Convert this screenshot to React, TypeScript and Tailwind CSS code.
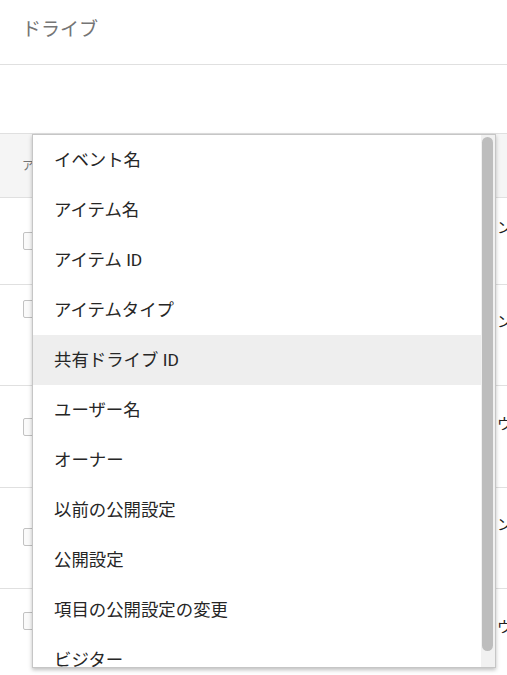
import React from 'react'

const OPTIONS = [
  'イベント名',
  'アイテム名',
  'アイテム ID',
  'アイテムタイプ',
  '共有ドライブ ID',
  'ユーザー名',
  'オーナー',
  '以前の公開設定',
  '公開設定',
  '項目の公開設定の変更',
  'ビジター',
]

const ROWS = [
  { h: 'h-[87px]', box: 'mt-[34px]', text: 'pt-[20px]', label: 'ンドライブ' },
  { h: 'h-[101px]', box: 'mt-[15px]', text: 'pt-[27px]', label: 'ンドライブ' },
  { h: 'h-[102px]', box: 'mt-[32px]', text: 'pt-[28px]', label: 'ウンロード' },
  { h: 'h-[101px]', box: 'mt-[40px]', text: 'pt-[27px]', label: 'ンドライブ' },
  { h: 'h-[101px]', box: 'mt-[23px]', text: 'pt-[28px]', label: 'ウンロード' },
]

function Dropdown() {
  return (
    <div className="absolute left-[32px] top-[134px] w-[464px] h-[534px] bg-white border border-[#c6c6c6] shadow-[0_2px_4px_rgba(0,0,0,0.25)] flex overflow-hidden">
      <ul className="flex-1">
        {OPTIONS.map((o, i) => (
          <li
            key={o}
            className={`h-[50px] pl-[21px] flex items-center text-[17.4px] text-[#262626] ${i === 4 ? 'bg-[#eeeeee]' : ''}`}
          >
            {o}
          </li>
        ))}
      </ul>
      <div className="w-[14px] bg-[#f1f1f1] pt-[2px] pl-[1px]">
        <div className="w-[11px] h-[514px] rounded-full bg-[#bdbdbd]" />
      </div>
    </div>
  )
}

export default function App() {
  return (
    <div
      className="relative w-[507px] h-[675px] overflow-hidden bg-white"
      style={{ fontFamily: 'Roboto, "Noto Sans CJK JP", sans-serif' }}
    >
      <div className="h-[65px] border-b border-[#e0e0e0] pl-[22px] pb-[3px] flex items-center text-[19px] text-[#757575]">
        ドライブ
      </div>
      <div className="h-[68px]" />
      <div className="border-t border-[#e0e0e0]">
        <div className="h-[64px] bg-[#f5f5f5] border-b border-[#e0e0e0] flex items-center pl-[22px] text-[12px] text-[#757575]">
          アクション
        </div>
        {ROWS.map((r, i) => (
          <div key={i} className={`${r.h} border-b border-[#e0e0e0] flex items-start`}>
            <div className="w-[497px] shrink-0 pl-[23px]">
              <div className={`${r.box} w-[18px] h-[18px] border border-[#c2c2c2] bg-[#fafafa] rounded-[2px]`} />
            </div>
            <div className={`${r.text} text-[15px] leading-[20px] text-[#212121] whitespace-nowrap`}>{r.label}</div>
          </div>
        ))}
      </div>
      <Dropdown />
    </div>
  )
}
